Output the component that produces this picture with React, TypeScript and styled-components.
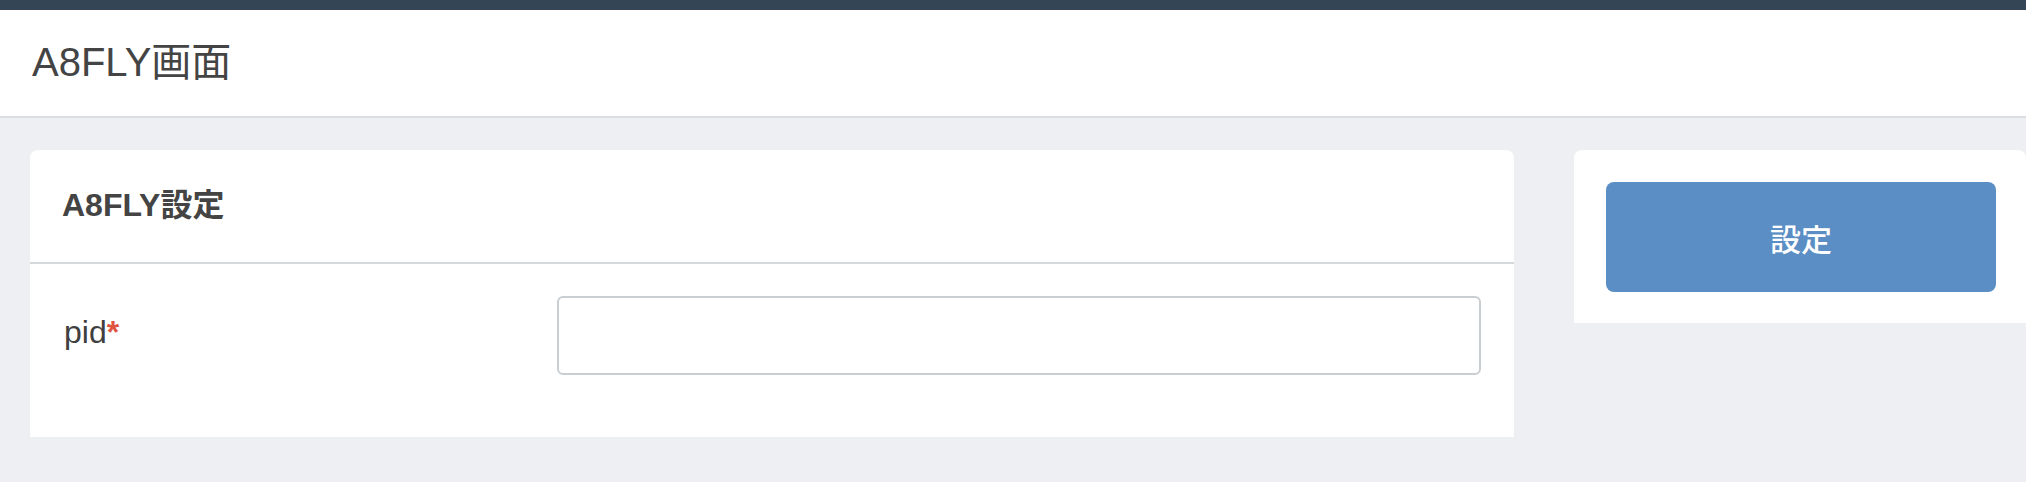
import styled, { createGlobalStyle } from 'styled-components'

const GlobalStyle = createGlobalStyle`
  html, body {
    margin: 0;
    padding: 0;
    background: #eeeff3;
    font-family: "Liberation Sans", "Noto Sans CJK JP", sans-serif;
    color: #444;
  }
  * {
    box-sizing: border-box;
  }
`

const TopBar = styled.div`
  height: 10px;
  background: #344556;
`

const Header = styled.header`
  height: 108px;
  display: flex;
  align-items: center;
  padding: 0 32px 2px;
  background: #fff;
  border-bottom: 2px solid #dcdde2;
`

const PageTitle = styled.h1`
  margin: 0;
  font-size: 40px;
  font-weight: 400;
  line-height: 1;
  color: #444;
`

const Content = styled.main`
  display: flex;
  align-items: flex-start;
  gap: 60px;
  padding: 32px 0 0 30px;
`

const Card = styled.section`
  flex: 1;
  background: #fff;
  border-radius: 8px 8px 0 0;
`

const CardHeader = styled.div`
  height: 114px;
  display: flex;
  align-items: center;
  padding: 0 32px 2px;
  border-bottom: 2px solid #d5d9dc;
`

const CardTitle = styled.h2`
  margin: 0;
  font-size: 32px;
  font-weight: 700;
  line-height: 1;
  color: #444;
`

const CardBody = styled.div`
  padding: 32px 33px 62px 32px;
`

const FormRow = styled.div`
  display: grid;
  grid-template-columns: 495px 1fr;
  align-items: start;
`

const Label = styled.label`
  padding: 16px 0 0 2px;
  font-size: 32px;
  line-height: 40px;
  color: #3f3f3f;
`

const Required = styled.span`
  color: #e0533f;
  font-weight: 700;
`

const TextInput = styled.input`
  width: 100%;
  height: 79px;
  padding: 0 20px;
  border: 2px solid #c8ced2;
  border-radius: 6px;
  font: inherit;
  font-size: 28px;
  color: #444;
  outline: none;
`

const Side = styled.aside`
  width: 452px;
  padding: 32px 30px 31px 32px;
  background: #fff;
  border-radius: 8px 8px 0 0;
`

const SubmitButton = styled.button`
  width: 100%;
  height: 110px;
  border: none;
  border-radius: 8px;
  background: #5b8ec4;
  color: #fff;
  font-family: inherit;
  font-size: 31px;
  font-weight: 500;
  cursor: pointer;
`

export default function App() {
  return (
    <>
      <GlobalStyle />
      <TopBar />
      <Header>
        <PageTitle>A8FLY画面</PageTitle>
      </Header>
      <Content>
        <Card>
          <CardHeader>
            <CardTitle>A8FLY設定</CardTitle>
          </CardHeader>
          <CardBody>
            <FormRow>
              <Label htmlFor="pid">
                pid<Required>*</Required>
              </Label>
              <TextInput id="pid" type="text" />
            </FormRow>
          </CardBody>
        </Card>
        <Side>
          <SubmitButton type="button">設定</SubmitButton>
        </Side>
      </Content>
    </>
  )
}
